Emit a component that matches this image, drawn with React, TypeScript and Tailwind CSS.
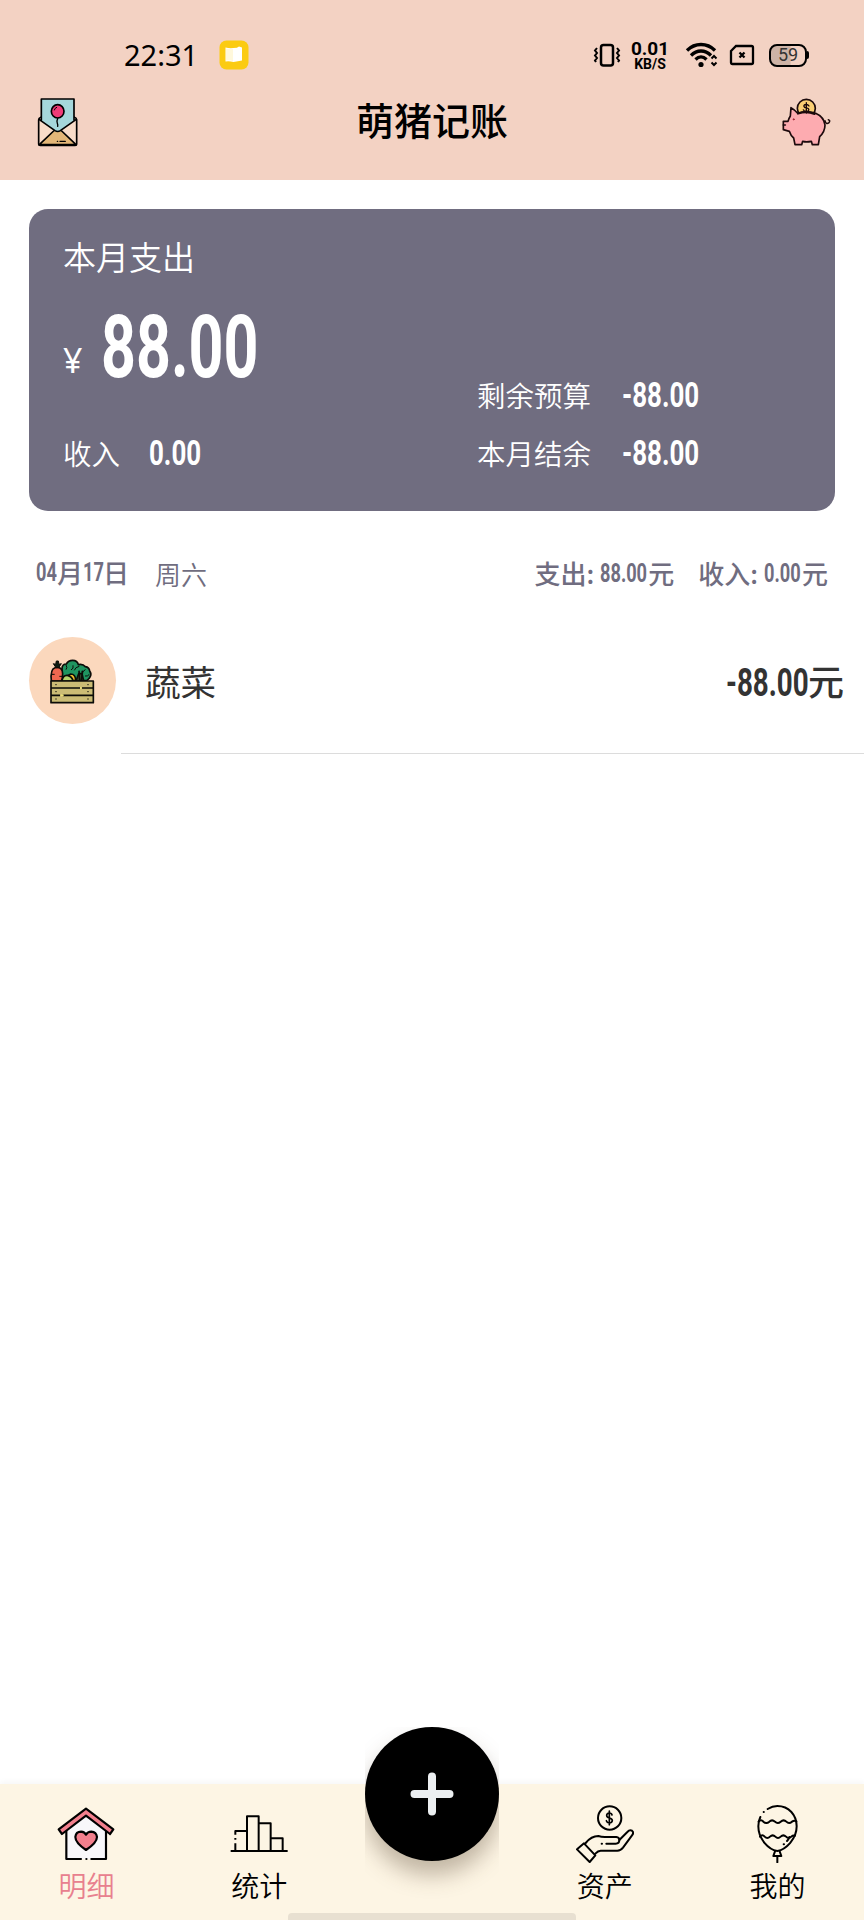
import React from 'react';

interface CondensedProps {
  children: React.ReactNode;
  className: string;
  scale?: string;
}

// Narrow figures: the outer box fixes the width, the inner text is squeezed
const Condensed: React.FC<CondensedProps> = ({ children, className, scale = 'scale-x-[0.73]' }) => (
  <span className={`inline-block whitespace-nowrap font-[Roboto,sans-serif] font-bold ${className}`}>
    <span className={`inline-block origin-left ${scale}`}>{children}</span>
  </span>
);

const StatusBar: React.FC = () => (
  <div className="mt-[35px] flex h-10 items-center pl-[124px] pr-[55px]">
    <span className="-mt-[2px] w-[95px] font-['Noto_Sans',sans-serif] text-[29px] leading-none">22:31</span>
    <svg className="h-[30px] w-[30px]" viewBox="0 0 30 30">
      <rect x="0.5" y="0.5" width="29" height="29" rx="7" fill="#fbcb12" />
      <path d="M6.500 7.500q4 1 8 .5q4 0 5.500-1.500l3 1v13q-4 .5-8.500 1.500q-4-1-8-.5z" fill="#fff" />
      <path d="M7 8.500q3.500 1 7 .5v12q-3.500-1-7-.5z" fill="#fff8dc" />
    </svg>

    <div className="ml-auto flex items-center">
      <svg className="mr-[1px] h-[26px] w-[28px]" viewBox="0 0 28 26" fill="none" stroke="#000" strokeWidth="2.500">
        <rect x="8" y="3" width="12" height="20.500" rx="2.500" />
        <path d="M4 6l-2 2.500 2 2.500-2 2.500 2 2.500-2 2.500 1 1.500M24 6l2 2.500-2 2.500 2 2.500-2 2.500 2 2.500-1 1.500" strokeWidth="2" />
      </svg>
      <div className="ml-[8px] flex w-[40px] flex-col items-center font-[Roboto,sans-serif] font-bold">
        <span className="text-[19px] leading-[17px]">0.01</span>
        <span className="text-[14px] leading-[14px]">KB/S</span>
      </div>
      <svg className="ml-[15px] h-[28px] w-[34px]" viewBox="0 0 34 28" fill="none" stroke="#000" strokeWidth="3.300">
        <path d="M2 9.500C10 1.500 22 1.500 30 9.500" />
        <path d="M6 14.500C12 8.500 20 8.500 26 14.500" />
        <path d="M10.500 18.500C14 15 18 15 21.500 18.500" />
        <circle cx="16" cy="23.500" r="2.600" fill="#000" stroke="none" />
        <path d="M26.500 17.500l2.500-2.500 2.500 2.500M26.500 21.500l2.500 2.500 2.500-2.500" strokeWidth="2" />
      </svg>
      <svg className="ml-[10px] h-[22px] w-[26px]" viewBox="0 0 26 22" fill="none" stroke="#000" strokeWidth="2.300">
        <path d="M2 7l5-5h15.500q1.500 0 1.500 1.500v15q0 1.500-1.500 1.500h-19q-1.500 0-1.500-1.500z" />
        <path d="M10.500 8.500l5 5M15.500 8.500l-5 5" />
      </svg>
      <div className="ml-[14px] flex items-center">
        <div className="flex h-[23px] w-[38px] items-center justify-center rounded-[8px] border-2 border-black bg-linear-to-r from-[#cdb3a6] from-55% to-transparent to-60% font-[Roboto,sans-serif] text-[18px] leading-none text-[#333]">
          59
        </div>
        <div className="h-[8px] w-[2px] rounded-r bg-black" />
      </div>
    </div>
  </div>
);

const EnvelopeIcon: React.FC = () => (
  <svg className="h-[50px] w-[42px]" viewBox="39 36 126 150" stroke="#000" strokeWidth="5" strokeLinejoin="round" strokeLinecap="round">
    <path d="M44 104q0-5 8-8h98q8 3 8 8v72q0 5-5 5H49q-5 0-5-5z" fill="#f8dcc9" />
    <path d="M46 179l46-44q9-7 18 0l46 44z" fill="#e3b778" />
    <path d="M52 42h98v64l-39 31q-10 7-20 0l-39-31z" fill="#a5d7db" stroke="none" />
    <path d="M52 105V42h98v63M45 103l48 34q8 5 16 0l48-34" fill="none" />
    <ellipse cx="101" cy="79" rx="19" ry="20" fill="#f03c78" />
    <path d="M91 75q1-6 7-8" fill="none" strokeWidth="3" />
    <path d="M101 101q-4 8-1 14q2 5 1 9" fill="none" strokeWidth="4" />
    <path d="M100 169h1M108 169h16" fill="none" strokeWidth="4" />
  </svg>
);

const PiggyIcon: React.FC = () => (
  <svg className="h-[50px] w-[51px]" viewBox="33 36 153 150" stroke="#1c0a0c" strokeWidth="5" strokeLinejoin="round" strokeLinecap="round">
    <circle cx="109" cy="70" r="27" fill="#fbcf74" />
    <path
      d="M61 93l2-25q10 5 20 17q26-10 54 0q25 11 28 35q0 20-16 35l-4 24h-18l-3-10q-15 3-26 0l-3 10H75l-4-20q-9-7-13-20l-18-5v-25h14q2-8 7-16z"
      fill="#fdabb0"
    />
    <path d="M84 86q25-9 50 1" fill="none" strokeWidth="6" />
    <path d="M165 107q3 13 12 6q5-7-2-9" fill="none" strokeWidth="4.500" />
    <path d="M40 120h6" fill="none" />
    <circle cx="71" cy="103" r="2" fill="#a02030" stroke="#a02030" strokeWidth="2" />
    <path d="M117 63q-3-5-9-4.500q-8 1-6 6q1 3 7 4q9 2 7 7q-2 5-8 4q-6 0-8-5M109 53v31" fill="none" strokeWidth="4" />
  </svg>
);

const VegetableIcon: React.FC = () => (
  <svg className="mr-[1px] h-[46px] w-[46px]" viewBox="149 352 138 138" stroke="#0c0c08" strokeWidth="5" strokeLinejoin="round">
    <path d="M188 420v-35q0-15 13-15q6-11 19-11q14 0 17 13q14-3 21 6q12 2 13 13q6 8 2 16q-3 8-11 13z" fill="#1f9460" />
    <path d="M200 373q5 8 0 14M221 374q3 10-6 14M240 377q-12 2-15 12M258 386q-4 8-12 8M270 401q-5 7-13 5" fill="none" strokeWidth="3" />
    <path d="M202 420q-2-15 12-20q15 0 15 20z" fill="#f3bd2c" />
    <path d="M188 421q2-18 16-17q15 3 17 17z" fill="#b5d36a" />
    <path d="M230 421l8-22h10l5 22z" fill="#3c4b2d" />
    <path d="M239 390l2 31M250 390l-4 31" />
    <path d="M156 421q-4-35 11-40q23-4 23 18q0 13-4 22z" fill="#ef6750" />
    <path d="M170 381l-8-12 7 2 2-10h6l2 10 7-2-8 12z" fill="#0c1c12" strokeWidth="3" />
    <path d="M156 401h10M180 407h10" strokeWidth="3" />
    <path d="M155 421h127v65H155z" fill="#cbbc75" />
    <path d="M155 442h87m5 0h35M155 464h27m8 0h92" />
    <path d="M242 442h6M184 464h9" stroke="#eee27a" />
    <path d="M168 432h4M264 432h4M168 453h4M264 453h4M168 475h4M264 475h4" strokeWidth="3" />
  </svg>
);

const HomeIcon: React.FC = () => (
  <svg className="h-[58px] w-[58px]" viewBox="172 134 174 174" stroke="#000" strokeWidth="6.500" strokeLinejoin="round" strokeLinecap="round">
    <path d="M200 210l59-45 60 45v86H200z" fill="#f8f7fa" stroke="none" />
    <path d="M200 213v83h44M275 296h44v-83M260 296h.5" fill="none" />
    <path d="M259 145l82 62-10 14-72-55-72 55-10-14z" fill="#f27f8d" />
    <path d="M259 269q-32-22-32-39q2-16 17-16q11 1 15 9q5-9 16-9q15 1 17 16q0 17-33 39z" fill="#f27f8d" />
  </svg>
);

const ChartIcon: React.FC = () => (
  <svg className="h-[58px] w-[58px]" viewBox="691 134 174 174" fill="none" stroke="#000" strokeWidth="6" strokeLinejoin="round">
    <path d="M693 272h171M742 270V168h35v102M779 189h34v81M815 234h34v36M742 212h-35v11M707 233v5M707 249v21" />
  </svg>
);

const AssetIcon: React.FC = () => (
  <svg className="h-[58px] w-[58px]" viewBox="108 133 174 174" fill="none" stroke="#000" strokeWidth="6" strokeLinejoin="round" strokeLinecap="round">
    <circle cx="209" cy="172" r="35" />
    <path d="M216 163q-1-6-8-6q-8 1-8 7q0 6 8 8q9 2 9 8q-1 7-9 7q-7-1-9-7M208 151v41" strokeWidth="5" />
    <path d="M111 266l21-18 34 36-17 20z" />
    <path d="M137 247q17-21 38-21q8 3 20 3h34q9 1 9 9l24-24q7-8 14-4q7 6 0 14l-27 37q-7 9-17 9h-50q-8 0-16 9" />
    <path d="M238 238q0 11-11 11h-28M185 249h1" />
  </svg>
);

const BalloonIcon: React.FC = () => (
  <svg className="h-[58px] w-[58px]" viewBox="628 133 174 174" fill="none" stroke="#000" strokeWidth="6" strokeLinejoin="round" strokeLinecap="round">
    <path d="M684 145q14-9 29-9c35 0 58 28 58 61c0 38-32 69-58 74c-27-5-57-36-57-74q0-15 6-28M672 154h.5" />
    <path d="M657 183q7-8 14 0q9 8 18 0q8-8 17 0q8 8 17 0q9-8 17 0q8 8 17 0q7-5 13-1" />
    <path d="M661 228q7-8 14 0q8 8 16 0q8-8 16 0q8 8 16 0q8-8 16 0q8 8 16 0q5-5 11-3" />
    <path d="M749 229q-2 7-7 12M732 251h1" />
    <path d="M706 272l-5 14h24l-5-14M713 287v18" />
  </svg>
);

const tabs = [
  { label: '明细', icon: <HomeIcon />, active: true },
  { label: '统计', icon: <ChartIcon /> },
  null,
  { label: '资产', icon: <AssetIcon /> },
  { label: '我的', icon: <BalloonIcon /> },
];

const TabBar: React.FC = () => (
  <nav className="relative grid h-[136px] grid-cols-5 bg-[#fdf5e4] shadow-[0_-2px_6px_rgba(0,0,0,0.04)]">
    {tabs.map((tab, index) =>
      tab ? (
        <button key={tab.label} type="button" className="flex flex-col items-center pt-[21px]">
          {tab.icon}
          <span className={`mt-[4px] text-[28px] font-[350] leading-[36px] ${tab.active ? 'text-[#e8808e]' : 'text-black'}`}>
            {tab.label}
          </span>
        </button>
      ) : (
        <div key={index} />
      )
    )}
    <div className="absolute -top-[57px] left-[365px] h-[190px] w-[134px] overflow-hidden">
      <button
        type="button"
        aria-label="记一笔"
        className="flex h-[134px] w-[134px] items-center justify-center rounded-full bg-black shadow-[0_14px_22px_rgba(80,60,40,0.35)]"
      >
        <svg className="h-11 w-11" viewBox="0 0 44 44" stroke="#eceff1" strokeWidth="8" strokeLinecap="round">
          <path d="M22 4.500v35M4.500 22h35" />
        </svg>
      </button>
    </div>
    <div className="absolute bottom-0 left-[288px] h-[7px] w-[288px] rounded-t-[4px] bg-[#e8e0d1]" />
  </nav>
);

const App: React.FC = () => {
  return (
    <div className="flex h-[1920px] w-[864px] flex-col overflow-hidden bg-white font-['Noto_Sans_CJK_SC',sans-serif] text-black">
      <header className="flex h-[180px] flex-col bg-[#f3d2c3]">
        <StatusBar />
        <div className="mt-[9px] flex h-[76px] items-center justify-between pl-[37px] pr-[32px]">
          <EnvelopeIcon />
          <h1 className="-mt-[7px] pl-[4px] text-[38px] font-medium leading-none">萌猪记账</h1>
          <PiggyIcon />
        </div>
      </header>

      <main className="flex flex-1 flex-col">
        <section className="mx-[29px] mt-[29px] flex h-[302px] flex-col rounded-[19px] bg-[#706d80] pl-[34px] pt-[27px] text-white">
          <h2 className="text-[33px] font-[350] leading-[40px]">本月支出</h2>
          <div className="mt-[26px] flex h-[90px] items-baseline">
            <span className="relative -top-[4px] w-[38px] font-['Noto_Sans',sans-serif] text-[34px] leading-[90px]">¥</span>
            <Condensed className="w-[160px] text-[87px] leading-[90px]" scale="scale-x-[0.7]">
              88.00
            </Condensed>
          </div>
          <div className="-mt-[26px] grid grid-cols-[414px_1fr] text-[28.500px] font-[350] leading-[58px]">
            <div />
            <div className="flex items-baseline">
              <span className="w-[145px]">剩余预算</span>
              <Condensed className="text-[35.500px]">-88.00</Condensed>
            </div>
            <div className="flex items-baseline">
              <span className="w-[86px]">收入</span>
              <Condensed className="text-[35.500px]">0.00</Condensed>
            </div>
            <div className="flex items-baseline">
              <span className="w-[145px]">本月结余</span>
              <Condensed className="text-[35.500px]">-88.00</Condensed>
            </div>
          </div>
        </section>

        <section className="mt-[42px]">
          <div className="flex h-[40px] items-center justify-between pl-[36px] pr-[36px] text-[26px] leading-[40px] text-[#706d80]">
            <div className="-mt-[1px] flex font-medium">
              <Condensed className="w-[21px]" scale="scale-x-[0.7]">04</Condensed>
              <span>月</span>
              <Condensed className="w-[20px]" scale="scale-x-[0.7]">17</Condensed>
              <span>日</span>
              <span className="ml-[26px] mt-[2px] font-[350]">周六</span>
            </div>
            <div className="-mt-[1px] flex font-medium">
              <span>支出:</span>
              <Condensed className="ml-[6px] w-[48px]" scale="scale-x-[0.7]">88.00</Condensed>
              <span>元</span>
              <span className="ml-[24px]">收入:</span>
              <Condensed className="ml-[6px] w-[38px]" scale="scale-x-[0.7]">0.00</Condensed>
              <span>元</span>
            </div>
          </div>

          <div className="mt-[44px] flex h-[87px] items-center pl-[29px] pr-[20px] text-[#333]">
            <div className="flex h-[87px] w-[87px] items-center justify-center rounded-full bg-[#fbd8bd]">
              <VegetableIcon />
            </div>
            <span className="ml-[29px] text-[35.500px] leading-none">蔬菜</span>
            <div className="ml-auto mt-[2px] flex items-baseline text-[36px] font-medium leading-none">
              <Condensed className="w-[82px] text-[38px]">-88.00</Condensed>
              <span>元</span>
            </div>
          </div>
          <div className="ml-[121px] mt-[29px] h-px bg-[#dcdcdc]" />
        </section>
      </main>

      <TabBar />
    </div>
  );
};

export default App;
